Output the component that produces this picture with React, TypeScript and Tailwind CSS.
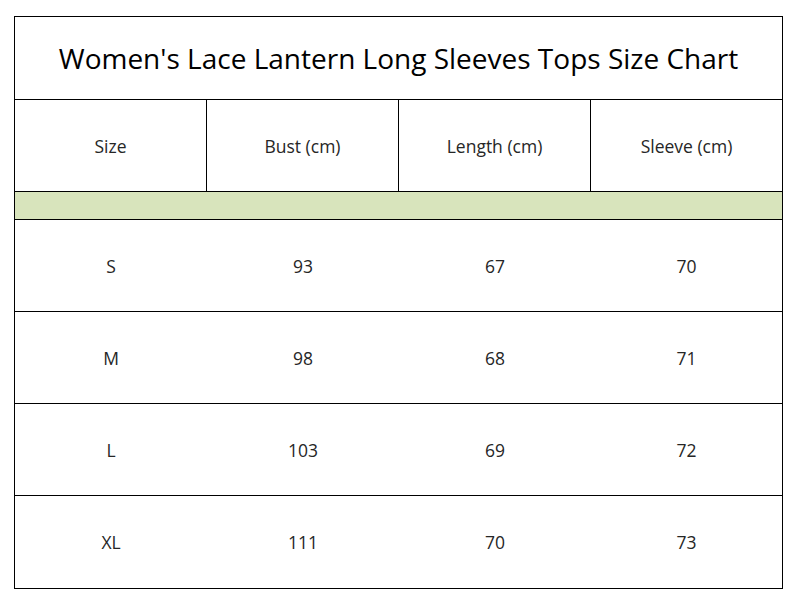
const headers = ["Size", "Bust (cm)", "Length (cm)", "Sleeve (cm)"];

const rows = [
  ["S", "93", "67", "70"],
  ["M", "98", "68", "71"],
  ["L", "103", "69", "72"],
  ["XL", "111", "70", "73"],
];

export default function App() {
  return (
    <div className="min-h-[602px] w-[796px] bg-white pl-[14px] pt-[16px] font-['Open_Sans','Lato',sans-serif]">
      <div className="w-[769px] border border-black">
        <div className="flex h-[83px] items-center justify-center border-b border-black text-[28px] text-black">
          Women's Lace Lantern Long Sleeves Tops Size Chart
        </div>

        <div className="grid h-[92px] grid-cols-[192px_192px_192px_191px] border-b border-black text-[17.5px] text-[#262626]">
          {headers.map((h, i) => (
            <div
              key={h}
              className={`flex items-center justify-center pt-px ${i < 3 ? "border-r border-black" : ""}`}
            >
              {h}
            </div>
          ))}
        </div>

        <div className="h-[28px] border-b border-black bg-[#d8e4bc]" />

        {rows.map((row, idx) => (
          <div
            key={row[0]}
            className={`grid h-[92px] grid-cols-[192px_192px_192px_191px] text-[17.5px] text-[#262626] ${
              idx < rows.length - 1 ? "border-b border-black" : "h-[91px]"
            }`}
          >
            {row.map((cell, i) => (
              <div key={i} className="flex items-center justify-center pt-px">
                {cell}
              </div>
            ))}
          </div>
        ))}
      </div>
    </div>
  );
}
